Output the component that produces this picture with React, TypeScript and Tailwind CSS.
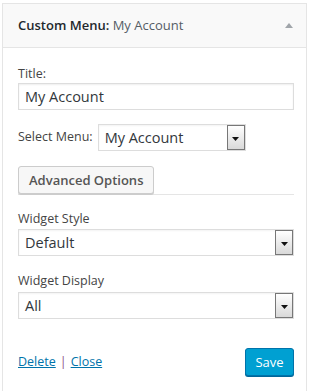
import React from 'react'

const font = { fontFamily: '"Open Sans", "Liberation Sans", sans-serif' }

function ArrowBox() {
  return (
    <div className="w-[18px] self-stretch border border-[#777] bg-gradient-to-b from-white to-[#d9d9d9] flex items-center justify-center">
      <svg width="7" height="4" viewBox="0 0 7 4" className="mt-[2px]">
        <path d="M0 0H7L3.5 4Z" fill="#111" />
      </svg>
    </div>
  )
}

function FakeSelect({ value, className = '' }: { value: string; className?: string }) {
  return (
    <div className={`flex h-[27px] border border-[#ddd] bg-white shadow-[inset_0_1px_2px_rgba(0,0,0,0.05)] ${className}`}>
      <div className="flex-1 pl-[6px] text-[14.5px] leading-[25px] text-[#32373c]">{value}</div>
      <ArrowBox />
    </div>
  )
}

export default function App() {
  return (
    <div className="w-[310px] h-[391px] bg-white pt-[3px] pl-[2px] pr-[3px]" style={font}>
      <div className="h-full border border-b-0 border-[#e5e5e5] flex flex-col">
        {/* header */}
        <div className="h-[44px] shrink-0 bg-[#f9f9f9] border-b border-[#e5e5e5] flex items-center pl-[15px] pr-[13px]">
          <div className="flex-1 text-[13px] text-[#23282d]">
            <span className="font-semibold">Custom Menu:</span>{' '}
            <span className="text-[#555d66]">My Account</span>
          </div>
          <svg width="8" height="5" viewBox="0 0 8 5">
            <path d="M0 5L4 0L8 5Z" fill="#a0a5aa" />
          </svg>
        </div>

        {/* body */}
        <div className="flex-1 pt-[17px] pl-[15px] pr-[12px] text-[12.5px] text-[#444]">
          <label className="block leading-[18px]">Title:</label>
          <div className="h-[27px] border border-[#ddd] shadow-[inset_0_1px_2px_rgba(0,0,0,0.07)] pl-[6px] text-[14.5px] leading-[25px] text-[#32373c]">
            My Account
          </div>

          <div className="mt-[14px] flex items-center gap-[5px]">
            <span>Select Menu:</span>
            <FakeSelect value="My Account" className="w-[148px]" />
          </div>

          <div className="mt-[15px] border-b border-[#e5e5e5]">
            <button className="h-[28px] px-[10px] rounded-[3px] border border-[#ccc] bg-[#f7f7f7] shadow-[0_1px_0_#ccc] text-[13px] font-semibold text-[#555] leading-[26px]">
              Advanced Options
            </button>
          </div>

          <label className="block mt-[15px] leading-[18px]">Widget Style</label>
          <FakeSelect value="Default" className="mt-[1px]" />

          <label className="block mt-[16px] leading-[18px]">Widget Display</label>
          <FakeSelect value="All" className="mt-[2px]" />

          <div className="mt-[29px] flex items-center justify-between">
            <div className="text-[12.5px]">
              <a className="text-[#0073aa] underline">Delete</a>
              <span className="mx-[4px] text-[#8a4f8a]">|</span>
              <a className="text-[#0073aa] underline">Close</a>
            </div>
            <button className="h-[28px] w-[49px] rounded-[3px] border border-[#0073aa] bg-[#00a0d2] text-white text-[13px] leading-[26px] shadow-[0_1px_0_#006799]">
              Save
            </button>
          </div>
        </div>
      </div>
    </div>
  )
}
